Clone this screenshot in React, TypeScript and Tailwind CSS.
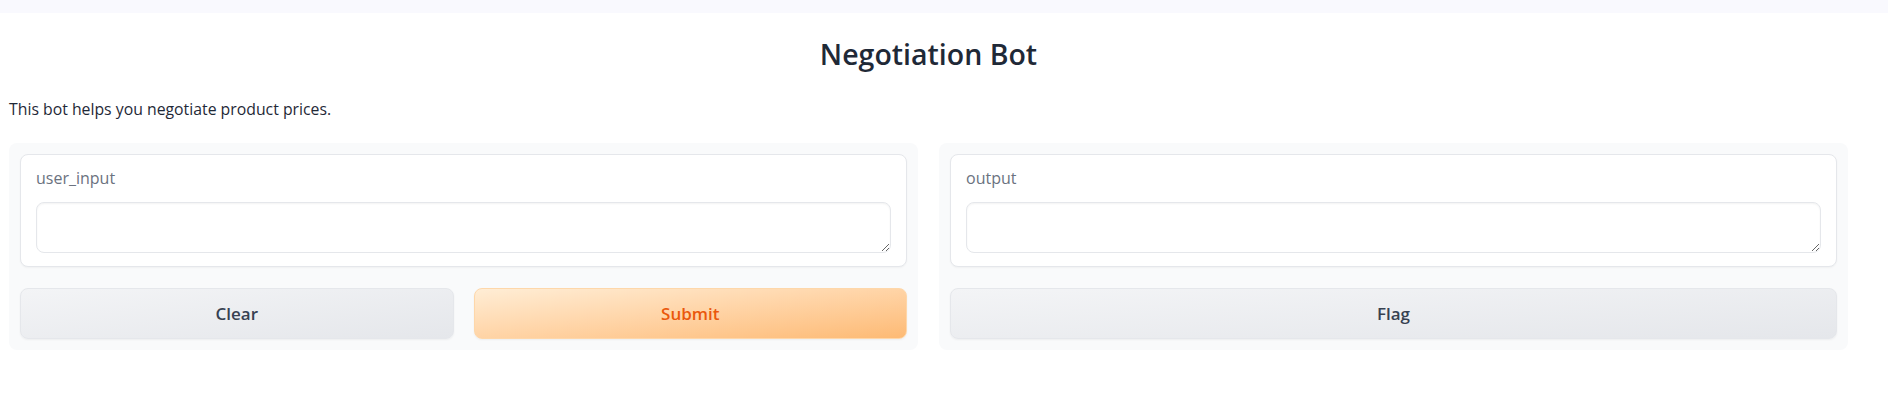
import React from "react";

function Field({ label }: { label: string }) {
  return (
    <div className="rounded-lg border border-[#e5e7eb] bg-white px-[15px] pt-[11px] pb-[13px] shadow-[0_1px_2px_rgba(0,0,0,0.04)]">
      <label className="block text-[16px] leading-[24px] text-[#6b7280]">{label}</label>
      <textarea
        rows={1}
        className="mt-[12px] block h-[51px] w-full rounded-lg border border-[#e5e7eb] bg-white px-3 py-2 text-[16px] text-[#1f2937] shadow-[inset_0_1px_2px_rgba(0,0,0,0.05)] outline-none"
      />
    </div>
  );
}

export default function App() {
  return (
    <div className="min-h-[414px] w-full bg-white font-['Open_Sans',sans-serif]">
      <div className="h-[13px] bg-[#f9f9fe]" />

      <div className="ml-[9px] w-[1839px]">
        <h1 className="pt-[21px] text-center text-[28.5px] leading-[40px] font-semibold text-[#1f2937]">
          Negotiation Bot
        </h1>

        <p className="mt-[23px] text-[15.8px] leading-[24px] text-[#1f2937]">
          This bot helps you negotiate product prices.
        </p>

        <div className="mt-[22px] flex gap-[21px]">
          <div className="flex flex-1 flex-col gap-[21px] rounded-lg bg-[#f9fafb] p-[11px]">
            <Field label="user_input" />
            <div className="flex gap-[20px]">
              <button className="h-[51px] flex-1 rounded-lg border border-[#e5e7eb] bg-gradient-to-br from-[#f3f4f6] to-[#e5e7eb] text-[17px] font-semibold text-[#374151] shadow-[0_1px_2px_rgba(0,0,0,0.05)]">
                Clear
              </button>
              <button className="h-[51px] flex-1 rounded-lg border border-[#fed7aa] bg-gradient-to-br from-[#ffedd5] to-[#fdba74] text-[17px] font-semibold text-[#ea580c] shadow-[0_1px_2px_rgba(0,0,0,0.05)]">
                Submit
              </button>
            </div>
          </div>

          <div className="flex flex-1 flex-col gap-[21px] rounded-lg bg-[#f9fafb] p-[11px]">
            <Field label="output" />
            <button className="h-[51px] w-full rounded-lg border border-[#e5e7eb] bg-gradient-to-br from-[#f3f4f6] to-[#e5e7eb] text-[17px] font-semibold text-[#374151] shadow-[0_1px_2px_rgba(0,0,0,0.05)]">
              Flag
            </button>
          </div>
        </div>
      </div>
    </div>
  );
}
